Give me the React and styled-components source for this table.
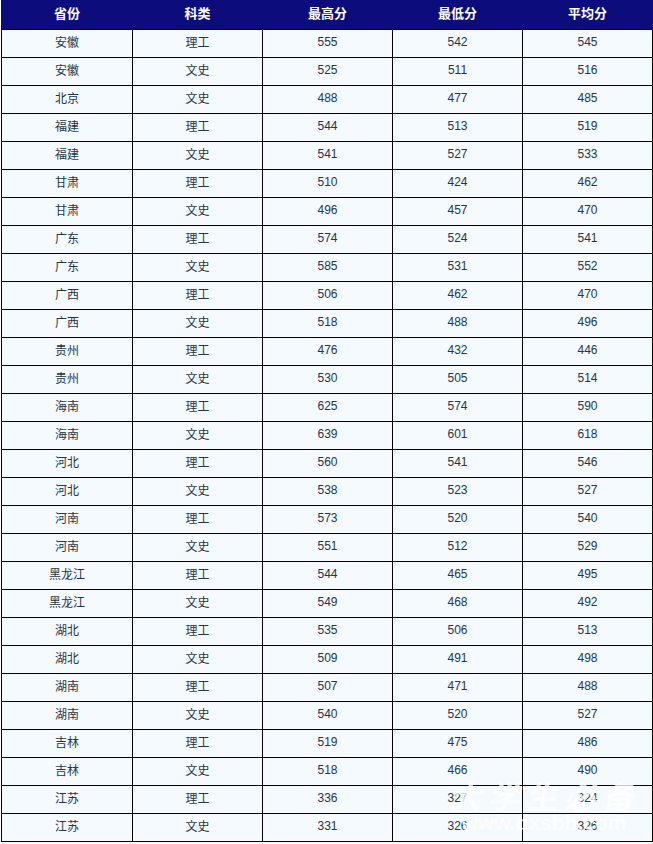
import React from "react";
import styled, { createGlobalStyle } from "styled-components";

const Global = createGlobalStyle`
  html, body { margin: 0; padding: 0; background: #ffffff; }
  body { width: 653px; height: 844px; overflow: hidden; }
`;

const Wrap = styled.div`
  position: relative;
  width: 653px;
  height: 844px;
  overflow: hidden;
  padding-left: 1px;
  box-sizing: border-box;
`;

const Table = styled.table`
  border-collapse: collapse;
  width: 651px;
  table-layout: fixed;
  font-family: "Noto Sans CJK SC", "Liberation Sans", sans-serif;
`;

const HeadCell = styled.th`
  height: 26px;
  padding: 0 0 3px 0;
  background: #0c0c7c;
  color: #ffffff;
  font-size: 13px;
  font-weight: bold;
  text-align: center;
  border-left: 1px solid #0c0c7c;
  border-right: 1px solid #0c0c7c;
  line-height: 24px;
`;

const Cell = styled.td`
  height: 24px;
  padding: 0 0 3px 0;
  background: #f5fafe;
  color: #1e3646;
  font-size: 12px;
  text-align: center;
  border: 1px solid #000000;
  line-height: 22px;
  font-family: ${(p) => (p.$num ? '"Liberation Sans", sans-serif' : '"Noto Sans CJK SC", sans-serif')};
`;

const Watermark = styled.div`
  position: absolute;
  right: 14px;
  bottom: 10px;
  display: flex;
  flex-direction: column;
  align-items: center;
  color: rgba(255, 255, 255, 0.8);
  font-family: "Noto Sans CJK SC", sans-serif;
  pointer-events: none;
`;

const WmTitle = styled.div`
  font-size: 32px;
  font-weight: bold;
  letter-spacing: 6px;
  line-height: 34px;
  font-style: italic;
`;

const WmUrl = styled.div`
  font-size: 21px;
  font-weight: bold;
  line-height: 22px;
  font-family: "Liberation Sans", sans-serif;
`;

const widths = [131, 130, 130, 130, 130];
const headers = ["省份", "科类", "最高分", "最低分", "平均分"];

const rows = [
  ["安徽", "理工", 555, 542, 545],
  ["安徽", "文史", 525, 511, 516],
  ["北京", "文史", 488, 477, 485],
  ["福建", "理工", 544, 513, 519],
  ["福建", "文史", 541, 527, 533],
  ["甘肃", "理工", 510, 424, 462],
  ["甘肃", "文史", 496, 457, 470],
  ["广东", "理工", 574, 524, 541],
  ["广东", "文史", 585, 531, 552],
  ["广西", "理工", 506, 462, 470],
  ["广西", "文史", 518, 488, 496],
  ["贵州", "理工", 476, 432, 446],
  ["贵州", "文史", 530, 505, 514],
  ["海南", "理工", 625, 574, 590],
  ["海南", "文史", 639, 601, 618],
  ["河北", "理工", 560, 541, 546],
  ["河北", "文史", 538, 523, 527],
  ["河南", "理工", 573, 520, 540],
  ["河南", "文史", 551, 512, 529],
  ["黑龙江", "理工", 544, 465, 495],
  ["黑龙江", "文史", 549, 468, 492],
  ["湖北", "理工", 535, 506, 513],
  ["湖北", "文史", 509, 491, 498],
  ["湖南", "理工", 507, 471, 488],
  ["湖南", "文史", 540, 520, 527],
  ["吉林", "理工", 519, 475, 486],
  ["吉林", "文史", 518, 466, 490],
  ["江苏", "理工", 336, 327, 324],
  ["江苏", "文史", 331, 326, 326],
];

export default function App() {
  return (
    <>
      <Global />
      <Wrap>
        <Table>
          <colgroup>
            {widths.map((w, i) => (
              <col key={i} style={{ width: w }} />
            ))}
          </colgroup>
          <thead>
            <tr>
              {headers.map((h) => (
                <HeadCell key={h}>{h}</HeadCell>
              ))}
            </tr>
          </thead>
          <tbody>
            {rows.map((r, i) => (
              <tr key={i}>
                {r.map((c, j) => (
                  <Cell key={j} $num={j >= 2}>
                    {c}
                  </Cell>
                ))}
              </tr>
            ))}
          </tbody>
        </Table>
        <Watermark>
          <WmTitle>大学生必备</WmTitle>
          <WmUrl>www.dxsbb.com</WmUrl>
        </Watermark>
      </Wrap>
    </>
  );
}
